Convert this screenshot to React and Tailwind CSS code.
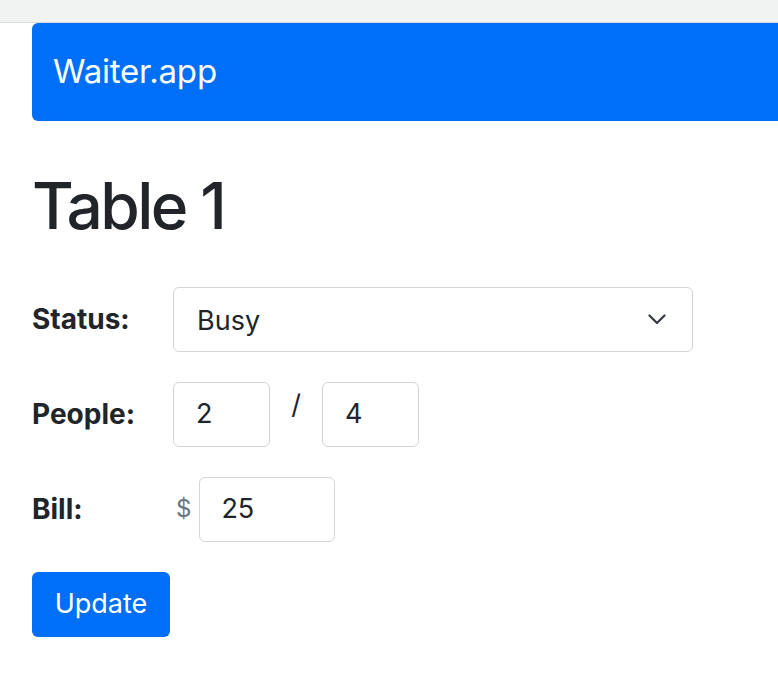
export default function App() {
  const font = { fontFamily: 'Inter, "Noto Sans", sans-serif' };
  return (
    <div className="min-h-[680px] w-[778px] bg-white text-[#212529] overflow-hidden" style={font}>
      <div className="h-[23px] bg-[#f1f2f2] border-b border-[#d9dada]" />
      <div className="pl-[32px]">
        <div className="h-[98px] bg-[#006ff8] rounded-l-[6px] flex items-center pl-[21px]">
          <span className="text-white text-[33px] leading-[1.5] tracking-[-0.2px]">Waiter.app</span>
        </div>
        <h1 className="mt-[47px] text-[64px] leading-[1.2] font-medium tracking-[-2.6px]">Table 1</h1>
        <div className="mt-[42px] flex flex-col gap-[30px]">
          <div className="flex items-center h-[65px]">
            <div className="w-[141px] text-[28px] font-bold leading-[1.5]">Status:</div>
            <div className="w-[520px] h-[65px] border border-[#d1d6db] rounded-[6px] flex items-center justify-between pl-[23px] pr-[26px]">
              <span className="text-[27px] leading-[1.5] mt-[3px]">Busy</span>
              <svg width="18" height="11" viewBox="0 0 18 11" fill="none">
                <path d="M1.5 1.5 L9 9 L16.5 1.5" stroke="#343a40" strokeWidth="2.2" strokeLinecap="round" strokeLinejoin="round" />
              </svg>
            </div>
          </div>
          <div className="flex items-start h-[65px]">
            <div className="w-[141px] h-[65px] flex items-center text-[28px] font-bold leading-[1.5]">People:</div>
            <div className="w-[97px] h-[65px] border border-[#d1d6db] rounded-[6px] flex items-center pl-[22px] text-[27px] leading-[1.5]">2</div>
            <span className="w-[52px] text-center text-[27px] leading-none mt-[9px]">/</span>
            <div className="w-[97px] h-[65px] border border-[#d1d6db] rounded-[6px] flex items-center pl-[22px] text-[27px] leading-[1.5]">4</div>
          </div>
          <div className="flex items-center h-[65px]">
            <div className="w-[144px] text-[28px] font-bold leading-[1.5]">Bill:</div>
            <span className="text-[24px] text-[#6c757d] leading-[1.5] mr-[8px]">$</span>
            <div className="w-[136px] h-[65px] border border-[#d1d6db] rounded-[6px] flex items-center pl-[21px] text-[27px] leading-[1.5]">25</div>
          </div>
          <div>
            <button className="w-[138px] h-[65px] bg-[#006ff8] text-white rounded-[6px] text-[27px] leading-[1.5] flex items-center justify-center">Update</button>
          </div>
        </div>
      </div>
    </div>
  );
}
